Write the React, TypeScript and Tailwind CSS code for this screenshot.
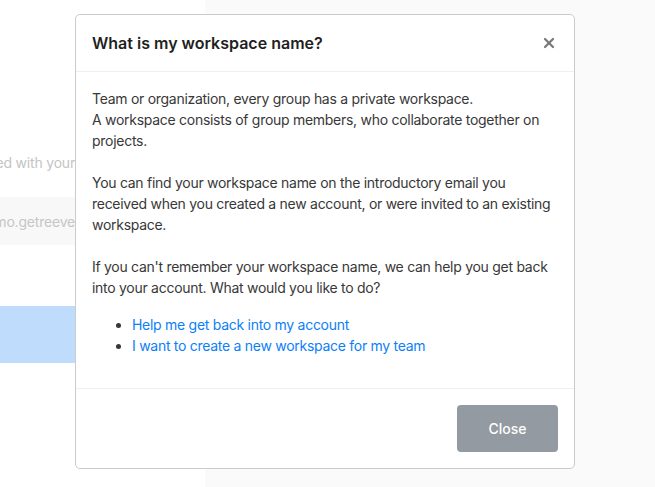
import { X } from "lucide-react";

const links = [
  "Help me get back into my account",
  "I want to create a new workspace for my team",
];

export default function App() {
  return (
    <div
      className="relative h-[487px] w-[655px] overflow-hidden bg-white"
      style={{ fontFamily: "Inter, 'Noto Sans', sans-serif" }}
    >
      {/* page behind the modal */}
      <div className="flex h-full">
        <div className="w-[205px] bg-white pt-[152px]">
          <div className="flex w-[75px] justify-end overflow-hidden whitespace-nowrap text-[14px] leading-[21px] tracking-[-0.2px] text-[#c4c4c4]">
            <span className="shrink-0">Enter the workspace you registered with your</span>
          </div>
          <div className="mt-[24px] flex h-[48px] w-[75px] items-center justify-end overflow-hidden bg-[#f8f8f8] text-[14px] tracking-[-0.2px] text-[#c6c6c6]">
            <span className="shrink-0 whitespace-nowrap">demo.getreeve</span>
          </div>
          <div className="mt-[61px] h-[57px] bg-[#bfdcfc]" />
        </div>
        <div className="flex-1 bg-[#fafafa]" />
      </div>

      {/* modal */}
      <div className="absolute left-[75px] top-[14px] w-[500px] rounded-[5px] border border-[#cbcbcb] bg-white">
        <div className="flex h-[57px] items-center justify-between border-b border-[#efefef] pl-4 pr-[17px]">
          <h2 className="text-[16px] font-semibold text-[#1f1f1f]">What is my workspace name?</h2>
          <X size={16} strokeWidth={3.4} className="text-[#7a7a7a]" />
        </div>
        <div className="px-4 py-4 text-[14px] leading-[21px] tracking-[-0.28px] text-[#383838]">
          <p className="mb-[21px]">
            Team or organization, every group has a private workspace.
            <br />
            A workspace consists of group members, who collaborate together on projects.
          </p>
          <p className="mb-[21px]">
            You can find your workspace name on the introductory email you received when you
            created a new account, or were invited to an existing workspace.
          </p>
          <p className="mb-4">
            If you can't remember your workspace name, we can help you get back into your
            account. What would you like to do?
          </p>
          <ul className="mb-4 list-disc pl-10">
            {links.map((l) => (
              <li key={l}>
                <a href="#" className="text-[#0d80f8]">
                  {l}
                </a>
              </li>
            ))}
          </ul>
        </div>
        <div className="flex justify-end border-t border-[#efefef] p-4">
          <button className="h-[47px] w-[101px] rounded-[4px] bg-[#939aa1] text-[14px] font-medium text-white">
            Close
          </button>
        </div>
      </div>
    </div>
  );
}
